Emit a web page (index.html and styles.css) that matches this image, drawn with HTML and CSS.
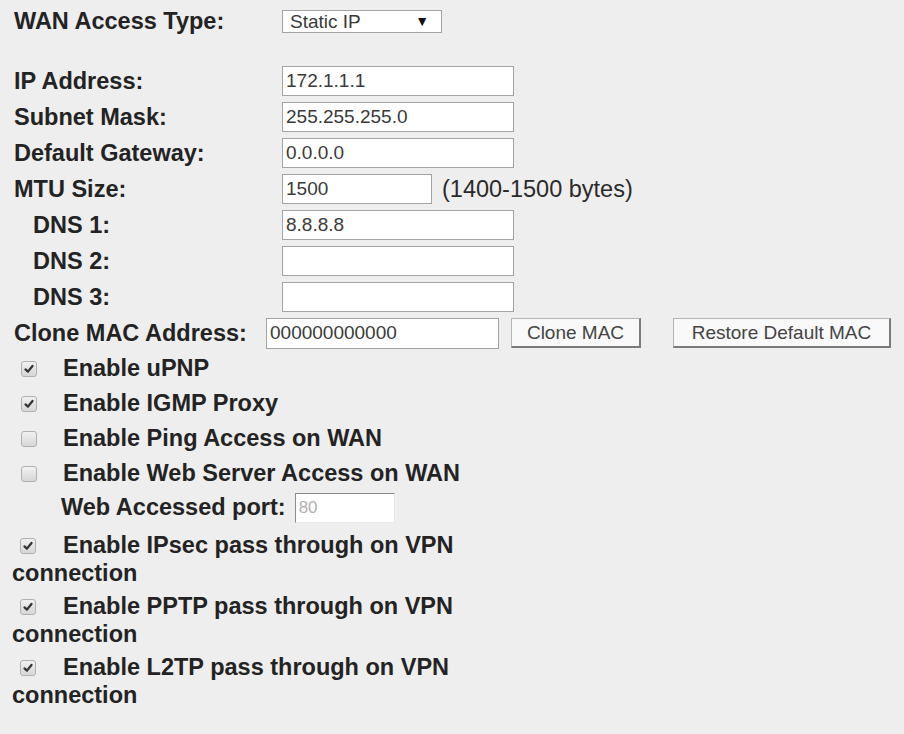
FILE: index.html
```html
<!DOCTYPE html>
<html lang="en">
<head>
  <meta charset="UTF-8" />
  <meta name="viewport" content="width=device-width, initial-scale=1.0">
  <title>WAN Interface Setup</title>
  <link rel="stylesheet" href="styles.css">
</head>
<body>
  <form class="form">

    <!-- WAN type -->
    <div class="row row-type">
      <label class="lbl">WAN Access Type:</label>
      <div class="sel-wrap">
        <select class="sel" name="wanType">
          <option>Static IP</option>
          <option>DHCP Client</option>
          <option>PPPoE</option>
        </select>
        <span class="sel-arrow">&#9660;</span>
      </div>
    </div>

    <!-- static settings -->
    <div class="row">
      <label class="lbl">IP Address:</label>
      <input type="text" class="txt" name="ip" value="172.1.1.1">
    </div>
    <div class="row">
      <label class="lbl">Subnet Mask:</label>
      <input type="text" class="txt" name="mask" value="255.255.255.0">
    </div>
    <div class="row">
      <label class="lbl">Default Gateway:</label>
      <input type="text" class="txt" name="gateway" value="0.0.0.0">
    </div>
    <div class="row">
      <label class="lbl">MTU Size:</label>
      <input type="text" class="txt short" name="mtu" value="1500">
      <span class="hint">(1400-1500 bytes)</span>
    </div>
    <div class="row">
      <label class="lbl indent">DNS 1:</label>
      <input type="text" class="txt" name="dns1" value="8.8.8.8">
    </div>
    <div class="row">
      <label class="lbl indent">DNS 2:</label>
      <input type="text" class="txt" name="dns2" value="">
    </div>
    <div class="row">
      <label class="lbl indent">DNS 3:</label>
      <input type="text" class="txt" name="dns3" value="">
    </div>

    <!-- MAC -->
    <div class="row mac-row">
      <label class="lbl mac-lbl">Clone MAC Address:</label>
      <input type="text" class="txt mac" name="mac" value="000000000000">
      <button type="button" class="btn btn-clone">Clone MAC</button>
      <button type="button" class="btn btn-restore">Restore Default MAC</button>
    </div>

    <!-- options -->
    <div class="check-row">
      <span class="box on"><svg viewBox="0 0 16 16"><path d="M4 8.5 L6.8 11 L12 4.5"/></svg></span>
      <span>Enable uPNP</span>
    </div>
    <div class="check-row">
      <span class="box on"><svg viewBox="0 0 16 16"><path d="M4 8.5 L6.8 11 L12 4.5"/></svg></span>
      <span>Enable IGMP Proxy</span>
    </div>
    <div class="check-row">
      <span class="box"></span>
      <span>Enable Ping Access on WAN</span>
    </div>
    <div class="check-row">
      <span class="box"></span>
      <span>Enable Web Server Access on WAN</span>
    </div>
    <div class="port-row">
      <span>Web Accessed port:</span>
      <input type="text" class="port" name="webPort" value="80" disabled>
    </div>

    <!-- VPN passthrough -->
    <div class="vpn">
      <p class="vpn-item"><span class="box on"><svg viewBox="0 0 16 16"><path d="M4 8.5 L6.8 11 L12 4.5"/></svg></span>Enable IPsec pass through on VPN connection</p>
      <p class="vpn-item"><span class="box on"><svg viewBox="0 0 16 16"><path d="M4 8.5 L6.8 11 L12 4.5"/></svg></span>Enable PPTP pass through on VPN connection</p>
      <p class="vpn-item"><span class="box on"><svg viewBox="0 0 16 16"><path d="M4 8.5 L6.8 11 L12 4.5"/></svg></span>Enable L2TP pass through on VPN connection</p>
    </div>

  </form>
</body>
</html>
```

FILE: styles.css
```css
body {
  margin: 0;
  background: #eeeeee;
  font-family: "Liberation Sans", Arial, sans-serif;
  color: #232323;
}

.form {
  padding-left: 12px;
}

.row {
  display: flex;
  align-items: center;
  height: 36px;
}

.row-type {
  height: 28px;
  margin-top: 7px;
  margin-bottom: 28px;
}

.lbl {
  flex: none;
  width: 270px;
  padding-left: 2px;
  box-sizing: border-box;
  font-size: 23.5px;
  font-weight: bold;
}
.lbl.indent { padding-left: 21px; }

/* select without native arrow */
.sel-wrap {
  position: relative;
  width: 160px;
  height: 23px;
}
.sel {
  appearance: none;
  -webkit-appearance: none;
  width: 100%;
  height: 100%;
  margin: 0;
  padding: 0 7px;
  border: 1px solid #a3a3a3;
  border-radius: 0;
  background: #fff;
  color: #3a3a3a;
  font-family: "Liberation Sans", Arial, sans-serif;
  font-size: 19px;
}
.sel-arrow {
  position: absolute;
  right: 13px;
  top: 3px;
  font-size: 14px;
  color: #111;
  pointer-events: none;
}

.txt {
  width: 232px;
  height: 30px;
  box-sizing: border-box;
  margin: 0;
  padding: 0 3px;
  border: 1px solid #a3a3a3;
  background: #fff;
  color: #3a3a3a;
  font-family: "Liberation Sans", Arial, sans-serif;
  font-size: 19px;
}
.txt.short { width: 150px; }

.hint {
  margin-left: 10px;
  font-size: 23.5px;
  color: #2a2a2a;
}

.mac-row { height: 36px; }
.lbl.mac-lbl { width: 254px; }
.txt.mac { width: 233px; height: 31px; }

.btn {
  height: 30px;
  margin: 0;
  padding: 0;
  background: #f9f9f9;
  border: 1px solid #b5b5b5;
  border-right: 2px solid #7a7a7a;
  border-bottom: 2px solid #7a7a7a;
  color: #444;
  font-family: "Liberation Sans", Arial, sans-serif;
  font-size: 19px;
}
.btn-clone {
  width: 130px;
  margin-left: 12px;
}
.btn-restore {
  width: 218px;
  margin-left: 32px;
}

/* checkboxes */
.box {
  display: inline-block;
  width: 16px;
  height: 16px;
  box-sizing: border-box;
  border: 1px solid #b0b0b0;
  border-radius: 3px;
  background: linear-gradient(#f1f1f1, #d6d6d6);
}
.box svg {
  display: block;
  width: 100%;
  height: 100%;
}
.box path {
  fill: none;
  stroke: #333;
  stroke-width: 2.6;
  stroke-linecap: round;
  stroke-linejoin: round;
}

.check-row {
  display: flex;
  align-items: center;
  height: 35px;
  font-size: 23.5px;
  font-weight: bold;
}
.check-row .box {
  margin-left: 9px;
  margin-right: 26px;
}

.port-row {
  display: flex;
  align-items: center;
  gap: 9px;
  height: 33px;
  padding-left: 49px;
  font-size: 23.5px;
  font-weight: bold;
}
.port {
  width: 100px;
  height: 30px;
  box-sizing: border-box;
  margin: 0;
  padding: 0 3px;
  border: 1px solid;
  border-color: #8c8c8c #e8e8e8 #e8e8e8 #8c8c8c;
  background: #fff;
  color: #b0b0b0;
  font-family: "Liberation Sans", Arial, sans-serif;
  font-size: 17px;
}

.vpn {
  width: 480px;
  margin-top: 7px;
}
.vpn-item {
  margin: 0 0 5px;
  line-height: 28px;
  font-size: 23.5px;
  font-weight: bold;
}
.vpn-item .box {
  margin-left: 8px;
  margin-right: 27px;
  vertical-align: -1px;
}
```
